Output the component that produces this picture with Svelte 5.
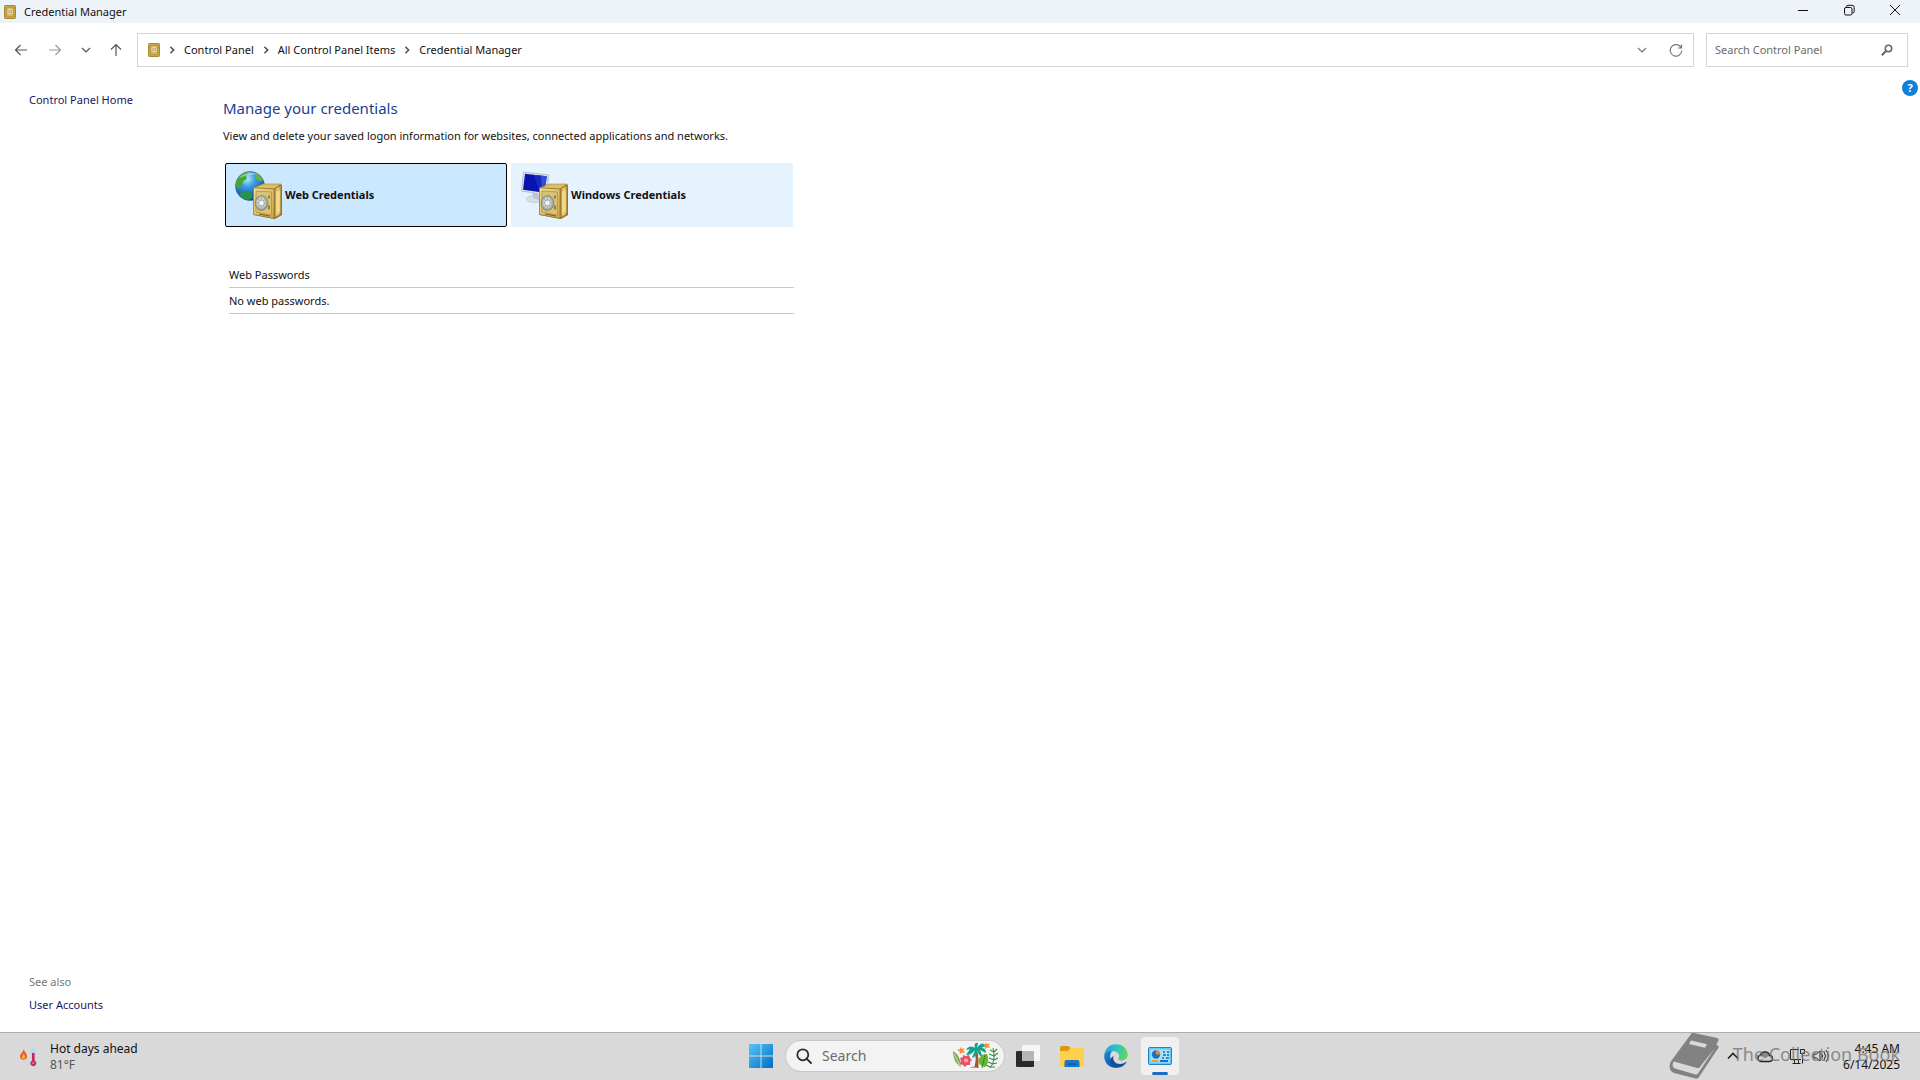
<script>
  let query = $state('')
  let taskQuery = $state('')
  let vault = $state('web')

  const crumbs = ['Control Panel', 'All Control Panel Items', 'Credential Manager']
</script>

{#snippet smallSafe()}
  <svg class="small-safe" viewBox="0 0 12 14" aria-hidden="true">
    <rect x="0.5" y="0.5" width="11" height="13" rx="0.8" fill="#c9a545" stroke="#a98833" />
    <path d="M2.500 2.500h7v9h-7z" fill="#d3b75c" stroke="#b3923c" stroke-width="0.7" />
    <circle cx="6.2" cy="6.500" r="2.400" fill="#b39a50" stroke="#f2e7bd" stroke-width="1" />
    <circle cx="6.2" cy="6.500" r="0.9" fill="#f5edcc" />
  </svg>
{/snippet}

{#snippet safe()}
  <path d="M19 17 28 13h17l2 1v30l-7 4-21-4z" fill="#8d6f27" />
  <path d="m19 17 9-4h18l-7 5z" fill="#d9bf6c" stroke="#a78535" stroke-width="0.6" />
  <path d="M39 18 46.500 14v29L39 47z" fill="url(#side)" stroke="#967426" stroke-width="0.7" />
  <path d="M18.500 16.800 39 18v29.500l-20.500-4z" fill="url(#door)" stroke="#9b7a2c" stroke-width="0.8" />
  <path d="m21 20 15.500 1v23L21 41z" fill="#dcc373" stroke="#b0903f" stroke-width="0.8" />
  <path d="m41 21 4-2v22l-4 2z" fill="#f4e29b" opacity="0.7" />
  <path d="m24 43 8 1.500 3 .5" stroke="#7a5d1d" stroke-width="1" />
  <ellipse cx="26.500" cy="32" rx="6.400" ry="7.500" fill="#9b9f99" stroke="#7b7e72" stroke-width="0.7" />
  <ellipse cx="26.300" cy="31.700" rx="4.800" ry="6" fill="#ccd1cd" stroke="#b5b9b2" />
  <path d="m23 27 7 10m0-9-7 9m3.500-11v12m-5-6h10" stroke="#a1a7a5" stroke-width="0.900" />
  <circle cx="26.500" cy="32" r="2.800" fill="#f0f3f1" stroke="#9a9f9d" stroke-width="0.7" />
  <path d="M34 24.500v3m0 7v4" stroke="#74591c" stroke-width="1.300" />
{/snippet}

{#snippet chevron(cls)}
  <svg class={cls} viewBox="0 0 10 10" fill="none" stroke="currentColor" stroke-width="1.2" aria-hidden="true">
    <path d="m1 3 4 4 4-4" />
  </svg>
{/snippet}

<div class="screen">
  <header class="titlebar">
    {@render smallSafe()}
    <span class="title">Credential Manager</span>
    <div class="window-buttons">
      <button aria-label="Minimize">
        <svg viewBox="0 0 12 12"><path d="M1 6.500h10" /></svg>
      </button>
      <button aria-label="Restore">
        <svg viewBox="0 0 12 12">
          <rect x="1.500" y="3.500" width="7.500" height="7.500" rx="1.500" />
          <path d="M3.500 3V2.800a1.500 1.500 0 0 1 1.500-1.500h4a2.200 2.200 0 0 1 2.200 2.200v4A1.500 1.500 0 0 1 9.700 9h-.4" />
        </svg>
      </button>
      <button aria-label="Close">
        <svg viewBox="0 0 12 12"><path d="m1 1 10 10m0-10-10 10" /></svg>
      </button>
    </div>
  </header>

  <nav class="toolbar" aria-label="Location">
    <div class="history">
      <button aria-label="Back">
        <svg class="arrow" viewBox="0 0 14 14"><path d="M13 7H1.500M6.500 2l-5 5 5 5" /></svg>
      </button>
      <button class="off" aria-label="Forward">
        <svg class="arrow" viewBox="0 0 14 14"><path d="M1 7h11.500M7.500 2l5 5-5 5" /></svg>
      </button>
      <button class="recent" aria-label="Recent locations">{@render chevron('chev')}</button>
      <button aria-label="Up">
        <svg class="arrow" viewBox="0 0 14 14"><path d="M7 13V1.500M2 6.500l5-5 5 5" /></svg>
      </button>
    </div>
    <div class="address">
      {@render smallSafe()}
      {#each crumbs as crumb}
        {@render chevron('sep')}
        <a class="crumb" href="#top">{crumb}</a>
      {/each}
      <button class="drop" aria-label="Previous locations">{@render chevron('chev')}</button>
      <button aria-label="Refresh">
        <svg class="arrow" viewBox="0 0 14 14">
          <path d="M12.300 5A5.800 5.800 0 1 0 12.800 7.500M12.500 1.500V5H9" />
        </svg>
      </button>
    </div>
    <label class="search">
      <input type="text" placeholder="Search Control Panel" aria-label="Search Control Panel" bind:value={query} />
      <svg viewBox="0 0 12 12" fill="none" stroke="#666" aria-hidden="true">
        <circle cx="7.500" cy="4.500" r="3.200" stroke-width="1.500" />
        <path d="M5 7 .8 11.200" stroke-width="2" />
      </svg>
    </label>
  </nav>

  <div class="body">
    <aside>
      <a href="#home">Control Panel Home</a>
      <div class="see-also">
        <span>See also</span>
        <a href="#accounts">User Accounts</a>
      </div>
    </aside>

    <main>
      <h1>Manage your credentials</h1>
      <p>View and delete your saved logon information for websites, connected applications and networks.</p>
      <div class="vaults">
        <button class="vault" class:selected={vault === 'web'} onclick={() => (vault = 'web')}>
          <svg viewBox="0 0 48 48" fill="none" aria-hidden="true">
            <defs>
              <radialGradient id="globe" cx="0.4" cy="0.25" r="0.8">
                <stop offset="0" stop-color="#b6ecff" />
                <stop offset="0.35" stop-color="#3d9be0" />
                <stop offset="1" stop-color="#093b8c" />
              </radialGradient>
              <linearGradient id="door" x1="0" x2="1" y2="1">
                <stop offset="0" stop-color="#f3df94" />
                <stop offset="1" stop-color="#c7a54c" />
              </linearGradient>
              <linearGradient id="side">
                <stop offset="0" stop-color="#a57d28" />
                <stop offset="0.5" stop-color="#ecd27c" />
                <stop offset="1" stop-color="#a87f2c" />
              </linearGradient>
            </defs>
            <circle cx="15" cy="15" r="14.500" fill="url(#globe)" stroke="#285e9c" stroke-width="0.6" />
            <path d="M2 9C4 4 8 1.500 13 1l1 2-3 2 1 3-4 2-1 4-3 3-3-1c-.5-3 0-5 1-7z" fill="#45a72f" />
            <path d="M19 1.500c4 1 7 4 9 8l-3 1-3-2-2-3 1-2z" fill="#62b735" />
            <path d="m6 22 5-2 5 2 2 4-4 3c-4 0-8-3-10-6z" fill="#279544" />
            <path d="M4 7c4-5 12-7 18-3-6-1-12 1-18 3z" fill="#fff" opacity="0.4" />
            {@render safe()}
          </svg>
          Web Credentials
        </button>
        <button class="vault" class:selected={vault === 'windows'} onclick={() => (vault = 'windows')}>
          <svg viewBox="0 0 48 48" fill="none" aria-hidden="true">
            <ellipse cx="13" cy="28" rx="7.500" ry="3.500" fill="#d6dfe5" stroke="#b4bec6" stroke-width="0.6" />
            <path d="m11 20 6 1 1 8-6-2z" fill="#bbc6cf" />
            <path d="m2.500 1 25.500 3-3 20L.5 20z" fill="#d9e3ee" stroke="#a9b8c7" stroke-width="0.8" />
            <path d="m4 2.800 21.800 2.500-2.400 16.500L2 18.700z" fill="#0714b0" />
            <path d="m13 4 12.800 1.300-2.400 16.500-4-.6z" fill="#324dd8" />
            <path d="m13 4 7 1 1 16.500-2-.3z" fill="#1728c0" />
            {@render safe()}
          </svg>
          Windows Credentials
        </button>
      </div>
      <section>
        <h2>Web Passwords</h2>
        <div class="empty">No web passwords.</div>
      </section>
    </main>

    <button class="help" aria-label="Help">?</button>
  </div>

  <footer class="taskbar">
    <button class="weather">
      <svg viewBox="0 0 20 20" fill="none" aria-hidden="true">
        <path d="M4 2c0 3 3 4 3 7a3.500 3.500 0 0 1-7 .3C0 7 2 6.500 4 2z" fill="#e95c2b" />
        <path d="M3.700 6.500c.2 1.500 1.500 2 1.300 3.700a1.500 1.500 0 0 1-3 0c0-1.500 1.300-2 1.700-3.700z" fill="#ffb638" />
        <path d="M11 2a2.300 2.300 0 0 1 4.600 0v11a3.800 3.800 0 1 1-4.600 0z" fill="#b9d7f4" />
        <path d="M12 6h2.600v7.700a2.900 2.900 0 1 1-2.600 0z" fill="#c9284f" />
        <circle cx="13.200" cy="16" r="1" fill="#f28ba2" />
      </svg>
      <span>Hot days ahead<small>81°F</small></span>
    </button>

    <div class="apps">
      <button class="app" aria-label="Start">
        <svg viewBox="0 0 24 24">
          <defs>
            <linearGradient id="win" gradientUnits="userSpaceOnUse" x1="0" y1="0" x2="24" y2="24">
              <stop offset="0" stop-color="#55c8f5" />
              <stop offset="1" stop-color="#006cc8" />
            </linearGradient>
          </defs>
          <path d="M0 0h11.500v11.500H0zM12.500 0H24v11.500H12.500zM0 12.500h11.500V24H0zM12.500 12.500H24V24H12.500z" fill="url(#win)" />
        </svg>
      </button>
      <label class="task-search">
        <svg class="lens" viewBox="0 0 16 16" fill="none" stroke="#2b2b2b" stroke-width="1.800" aria-hidden="true">
          <circle cx="6.800" cy="6.800" r="5.500" />
          <path d="m10.800 10.800 4.200 4.200" stroke-linecap="round" />
        </svg>
        <input type="text" placeholder="Search" aria-label="Search" bind:value={taskQuery} />
        <svg class="art" viewBox="0 0 46 28" fill="none" aria-hidden="true">
          <path d="M22 26c2-6 2-10 1-17l2-1c2 7 1.500 12 1.500 18z" fill="#9a5a2c" />
          <path d="M24 7C20 3 16 4 14 8l4-1-4 6c4 0 7-2 9-5l-3 8c4-1 5-4 5-8 1 4 3 6 6 8l-3-8 6 3c0-4-2-5-5-5l5-2c-2-4-6-3-9 2l1-5c-3-1-4 1-3 6z" fill="#14a08a" />
          <path d="M33 25c-5-1-7-4-6-8 2-4 5-5 8-5 2 6 1 10-2 13z" fill="#63b72c" />
          <path d="M33 13 30 26" stroke="#3a8c26" />
          <path d="M1 9c5 3 8 8 8 16-5-3-8-8-8-16z" fill="#7daf58" />
          <path d="m2 12 7 13" stroke="#ddd6a0" />
          <path d="m11 13 3 1 3-1 1 3 2 2-2 2 0 3-3 0-2 2-2-2-3-1 1-3-1-3 3-1z" fill="#ef4d79" />
          <circle cx="14" cy="18.500" r="2" fill="#ffc44c" />
          <path d="m8 5 2 2 2-1-.5 2.500L13 11l-3-.5L8 12l-.5-3L5 8l3-1z" fill="#ff8a32" />
          <path d="m34 0 1 2 3-.5-1.500 2L38 6l-3-.5L33 7l-.3-2.500L31 3l2.500-.5z" fill="#ff8a32" />
          <path d="M38 26c4-5 5-11 3-20" stroke="#3b8c3c" stroke-width="1" />
          <path d="m42 10-4-2m4 2 3-3m-3 7-5-2m5 2 4-3m-4 7-5-2m5 2 4-2m-5 6-5-2m4 2 5-1m-7 4-4-2m4 2 5 0" stroke="#3b8c3c" stroke-width="1.200" />
          <path d="M18 26c3-2 5-1 9 0z" fill="#e2963e" />
        </svg>
      </label>
      <button class="app" aria-label="Task view">
        <svg viewBox="0 0 24 24">
          <rect x="0" y="7" width="18" height="16" rx="1" fill="#2a2a2a" />
          <rect x="6" y="1" width="18" height="16" rx="1" fill="#fafafa" opacity="0.85" />
          <path d="M6 7h12v10H6z" fill="#b5b5b5" />
        </svg>
      </button>
      <button class="app" aria-label="File Explorer">
        <svg viewBox="0 0 24 24">
          <path d="M0 3.500A1.500 1.500 0 0 1 1.500 2h7L11 4.500V9H0z" fill="#d99a12" />
          <path d="M0 7h8l2.500-3H22.500A1.500 1.500 0 0 1 24 5.500V21a2 2 0 0 1-2 2H2a2 2 0 0 1-2-2z" fill="#ffd04c" />
          <path d="M4.500 23v-5a2 2 0 0 1 2-2h11a2 2 0 0 1 2 2v5z" fill="#1876cc" />
          <path d="M8 20h8" stroke="#0b569e" stroke-width="1.500" />
        </svg>
      </button>
      <button class="app" aria-label="Microsoft Edge">
        <svg viewBox="0 0 24 24">
          <defs>
            <linearGradient id="edge-top" x1="0" x2="1" y1="0.3" y2="0.5">
              <stop offset="0" stop-color="#1b9fe0" />
              <stop offset="0.5" stop-color="#2fc3c0" />
              <stop offset="1" stop-color="#62d957" />
            </linearGradient>
            <linearGradient id="edge-low" x1="0" x2="1" y1="0" y2="1">
              <stop offset="0" stop-color="#1787d6" />
              <stop offset="1" stop-color="#0d4b9c" />
            </linearGradient>
          </defs>
          <path d="M.3 11C1 5 5.500.3 12 .3c7 0 11.700 5 11.700 10.200 0 3.500-2.700 6-6 6-2.500 0-4-1-3.200-2.300 2-3-.3-7-5-7C5 7.200 1.500 8.500.3 11z" fill="url(#edge-top)" />
          <path d="M.3 11C1.500 8 4.500 7 8 7c-1 1-1.800 3-1.800 5.500 0 6 5.800 9.500 11.300 8.500-2 1.800-4 2.700-6.500 2.700C4 23.500-.3 17.500.3 11z" fill="url(#edge-low)" />
          <path d="M9.500 12c-1.200 4.500 2 8 6.500 8 2.300 0 4.200-.8 6-2 .4-.2.700.1.400.5-2 3-5 5-9 5.200-6.500.1-10.500-8-3.900-11.700z" fill="#114f9e" />
        </svg>
      </button>
      <button class="app active" aria-label="Control Panel">
        <svg viewBox="0 0 24 24">
          <rect x="0.500" y="3.500" width="23" height="17" rx="1" fill="#62c9f4" stroke="#1e83c5" />
          <path d="M2.500 5.500h19v13h-19z" fill="#a9e2fa" />
          <circle cx="8" cy="10.500" r="4.200" fill="#1674c6" />
          <path d="M8 6.300v4.200h4.200A4.200 4.200 0 0 0 8 6.300z" fill="#f28a25" />
          <path d="M15 8h2m2 0h2m-6 3h3m1 0h2m-7 3h2m2 0h3" stroke="#146cb3" stroke-width="1.500" />
          <path d="M3.500 17h7" stroke="#e9a13a" stroke-width="2" />
          <path d="M12 17h8" stroke="#1674c6" stroke-width="2" />
        </svg>
      </button>
    </div>

    <div class="tray">
      <button aria-label="Show hidden icons">
        <svg viewBox="0 0 16 16"><path d="m3 10.500 5-5 5 5" stroke-width="1.600" /></svg>
      </button>
      <button aria-label="OneDrive">
        <svg viewBox="0 0 16 16">
          <path d="M4 13.500a3.300 3.300 0 0 1-.5-6.500 4.800 4.800 0 0 1 9.100.5A3 3 0 0 1 12.700 13.500z" fill="#d0d0d0" stroke="none" />
          <path d="M3.500 7a4.800 4.800 0 0 1 9.100.5L8 10.500z" fill="#8a8a8a" stroke="none" />
          <path d="M4 13.500a3.300 3.300 0 0 1-.5-6.500 4.800 4.800 0 0 1 9.100.5A3 3 0 0 1 12.700 13.500z" stroke-width="1.300" />
        </svg>
      </button>
      <button class="quick">
        <svg viewBox="0 0 16 16" aria-label="Network">
          <path d="M10 1.500H1.500v10H12M5.500 11.500v3.500m4-3.500v3.500M3.500 15.500h8M11.500 1.500h4v4h-4zM13.500 5.500v10" />
        </svg>
        <svg viewBox="0 0 16 16" aria-label="Volume">
          <path d="M1 6v4h2.500L7 13V3L3.500 6zM9 6q1.500 2 0 4M11 4q3 4 0 8M13 2q4.500 6 0 12" />
        </svg>
      </button>
      <button class="clock">4:45 AM<span>6/14/2025</span></button>
    </div>

    <div class="mark">
      <svg viewBox="0 0 50 46" aria-hidden="true">
        <path d="M22 1c.5-1 1.500-1.500 3-1l23 5c1.500.4 2 1.500 1.300 2.800l-2 3.700 1.500 1c1 .6 1 1.500.5 2.500L30 44c-.8 1.500-2 2-3.500 1.600L5 40C0 38 0 33 1.500 29z" fill="#6d6d6d" />
        <path d="M5 28.500 28 35c1.500.3 2.500 0 3.300-1.500L46 15 29 40.500c-.7 1-1.500 1.200-2.500 1L6 35.500c-3-1.500-3-5-1-7z" fill="#dadada" />
        <path d="m22 7.500 16 3.700-2 3.500-16-3.700z" fill="#dadada" />
      </svg>
      <span>The Collection Book</span>
    </div>
  </footer>
</div>

<style>
  :global(body) {
    margin: 0;
    background: #fff;
  }

  .screen {
    display: flex;
    flex-direction: column;
    min-height: 100vh;
    font: 11px/16px "Noto Sans", sans-serif;
    color: #111;
  }

  button {
    display: flex;
    align-items: center;
    justify-content: center;
    padding: 0;
    border: none;
    background: none;
    font: inherit;
    color: inherit;
  }

  input {
    flex: 1;
    min-width: 0;
    padding: 0;
    border: none;
    outline: none;
    background: none;
    font: inherit;
  }

  input::placeholder {
    color: #6b6b6b;
    opacity: 1;
  }

  a {
    color: #17175f;
    text-decoration: none;
  }

  svg {
    flex: none;
  }

  .small-safe {
    width: 12px;
    height: 14px;
  }

  .titlebar {
    display: flex;
    align-items: center;
    height: 23px;
    padding-left: 4px;
    background: #eef3fa;
  }

  .title {
    margin-left: 8px;
  }

  .window-buttons {
    display: flex;
    align-self: flex-start;
    margin-left: auto;
    padding-right: 2px;
  }

  .window-buttons button {
    width: 46px;
    height: 20px;
  }

  .window-buttons svg {
    width: 12px;
    height: 12px;
    fill: none;
    stroke: #111;
  }

  .toolbar {
    display: flex;
    padding: 10px 12px 0 4px;
  }

  .history {
    display: flex;
    align-items: center;
    width: 133px;
    color: #555;
  }

  .history button {
    width: 34px;
    height: 34px;
  }

  .history .recent {
    width: 27px;
  }

  .history .off {
    color: #999;
  }

  .arrow {
    width: 14px;
    height: 14px;
    fill: none;
    stroke: currentColor;
    stroke-width: 1.2;
  }

  :global(.chev) {
    width: 10px;
    height: 10px;
  }

  .address {
    display: flex;
    flex: 1;
    align-items: center;
    height: 32px;
    padding: 0 0 0 10px;
    border: 1px solid #d4d4d4;
    color: #555;
  }

  :global(.sep) {
    width: 8px;
    height: 8px;
    margin: 0 8px;
    stroke-width: 2;
    transform: rotate(-90deg);
  }

  .crumb {
    color: #111;
  }

  .address button {
    width: 34px;
    height: 32px;
    color: #777;
  }

  .address .drop {
    margin-left: auto;
  }

  .search {
    display: flex;
    align-items: center;
    width: 178px;
    height: 32px;
    margin-left: 12px;
    padding: 0 14px 0 8px;
    border: 1px solid #d4d4d4;
  }

  .search svg {
    width: 12px;
    height: 12px;
  }

  .body {
    display: flex;
    flex: 1;
  }

  aside {
    display: flex;
    flex-direction: column;
    width: 194px;
    padding: 25px 0 19px 29px;
  }

  .see-also {
    display: flex;
    flex-direction: column;
    gap: 7px;
    margin-top: auto;
  }

  .see-also span {
    color: #777;
  }

  main {
    flex: 1;
    padding-top: 29px;
  }

  h1 {
    margin: 0;
    font-size: 15px;
    line-height: 24px;
    font-weight: 400;
    color: #1a3f94;
  }

  p {
    margin: 8px 0 19px;
  }

  .vaults {
    display: flex;
    gap: 4px;
    margin-left: 2px;
  }

  .vault {
    justify-content: flex-start;
    gap: 2px;
    width: 282px;
    height: 64px;
    padding-left: 9px;
    border: 1px solid #e5f3ff;
    border-radius: 2px;
    background: #e5f3ff;
    font-weight: 700;
  }

  .vault.selected {
    border-color: #000;
    background: #cce8ff;
  }

  .vault svg {
    width: 48px;
    height: 48px;
  }

  section {
    width: 565px;
    margin: 40px 0 0 6px;
  }

  h2,
  .empty {
    margin: 0;
    padding-bottom: 4px;
    border-bottom: 1px solid #c8c8c8;
    font-size: 11px;
    line-height: 16px;
    font-weight: 400;
  }

  .empty {
    padding-top: 5px;
  }

  .help {
    width: 16px;
    height: 16px;
    margin: 13px 2px 0 0;
    border-radius: 50%;
    background: #0f80d7;
    color: #fff;
    font-weight: 700;
  }

  .taskbar {
    position: relative;
    display: grid;
    grid-template-columns: 1fr auto 1fr;
    align-items: center;
    height: 45px;
    padding-bottom: 2px;
    border-top: 1px solid #adadad;
    background: #d9d9d9;
    font-size: 12px;
  }

  .weather {
    justify-content: flex-start;
    gap: 10px;
    padding: 2px 0 0 20px;
    text-align: left;
  }

  .weather svg {
    width: 20px;
    height: 20px;
  }

  .weather small {
    display: block;
    font-size: 12px;
    color: #555;
  }

  .apps {
    display: flex;
    align-items: center;
    padding-left: 1px;
  }

  .app {
    position: relative;
    width: 38px;
    height: 38px;
    margin: 0 3px;
    border-radius: 4px;
  }

  .app svg {
    width: 24px;
    height: 24px;
  }

  .active {
    background: #f0f0f0;
  }

  .active::after {
    content: "";
    position: absolute;
    bottom: 0;
    left: 11px;
    width: 16px;
    height: 3px;
    border-radius: 2px;
    background: #1a6fc0;
  }

  .task-search {
    display: flex;
    align-items: center;
    width: 202px;
    height: 30px;
    margin: 0 2px 0 3px;
    padding: 0 6px 0 10px;
    border-radius: 16px;
    background: #f3f3f3;
    box-shadow: 0 0 0 1px #c9c9c9;
  }

  .task-search input {
    margin-left: 10px;
    font-size: 14px;
  }

  .lens {
    width: 16px;
    height: 16px;
  }

  .art {
    width: 46px;
    height: 28px;
  }

  .tray {
    display: flex;
    align-items: center;
    justify-content: flex-end;
    padding-right: 20px;
  }

  .tray svg {
    width: 16px;
    height: 16px;
    fill: none;
    stroke: #222;
  }

  .tray button {
    width: 32px;
    height: 38px;
  }

  .tray .quick {
    gap: 8px;
    width: 40px;
    margin-left: 8px;
  }

  .tray .clock {
    flex-direction: column;
    align-items: flex-end;
    width: 71px;
    padding-top: 2px;
  }

  .mark {
    position: absolute;
    right: 20px;
    bottom: 1px;
    display: flex;
    align-items: center;
    gap: 14px;
    color: #777;
    font: 18px/24px "Noto Sans", sans-serif;
    opacity: 0.8;
    pointer-events: none;
  }

  .mark svg {
    width: 50px;
    height: 46px;
  }

  .mark span {
    padding-bottom: 4px;
  }
</style>
